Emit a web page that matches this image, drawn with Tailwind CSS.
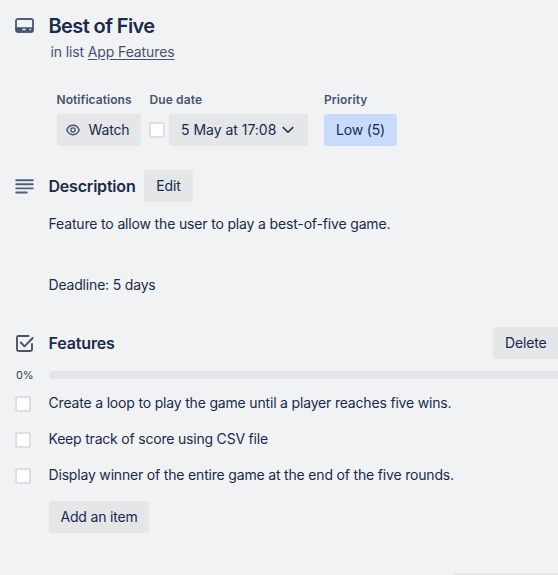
<!DOCTYPE html>
<html lang="en">
<head>
<meta charset="utf-8">
<title>Best of Five</title>
<script src="https://cdn.jsdelivr.net/npm/@tailwindcss/browser@4"></script>
</head>
<body class="h-[575px] w-[558px] overflow-hidden bg-[#f1f2f4] font-['Inter','Liberation_Sans',sans-serif] text-[14px] leading-5 tracking-[-0.15px] text-[#172b4d]">
<main class="h-[575px] overflow-hidden whitespace-nowrap">
  <header class="flex h-[90px] pt-[14px]">
    <div class="w-[48.5px] shrink-0 pl-[15px] pt-[4px]">
      <svg class="h-[15px] w-[19px]" viewBox="0 0 19 15" fill="none"><rect x="1" y="1" width="17" height="13" rx="2" stroke="#505f7b" stroke-width="1.900"/><path d="M1 9.300h17v3.200a1.500 1.500 0 0 1-1.500 1.500h-14A1.500 1.500 0 0 1 1 12.500z" fill="#44546f"/><path d="M7.500 11.500h3M14.500 11.500h1.500" stroke="#f1f2f4" stroke-width="1.300"/></svg>
    </div>
    <div>
      <h1 class="text-[20px] font-semibold leading-6 tracking-[-0.6px]">Best of Five</h1>
      <p class="mt-[4px] pl-[2px] tracking-[-0.12px] text-[#44546f]">in list <a class="underline underline-offset-2">App Features</a></p>
    </div>
  </header>

  <section class="flex h-[80px] pl-[57px]">
    <div class="w-[93px]">
      <h2 class="-ml-[0.5px] h-6 text-[12px] font-semibold tracking-[0.07px] text-[#44546f]">Notifications</h2>
      <button class="flex h-8 w-[84px] items-center rounded-[3px] bg-[#e4e6e8] pl-[9px]">
        <svg class="h-[12px] w-[14px]" viewBox="0 0 14 12" fill="none" stroke="#44546f" stroke-width="1.400"><path d="M.8 6C2 3 4.200 1.300 7 1.300S12 3 13.200 6C12 9 9.800 10.700 7 10.700S2 9 .8 6z"/><circle cx="7" cy="6" r="2.100"/></svg>
        <span class="ml-[8.5px]">Watch</span>
      </button>
    </div>
    <div class="w-[174px]">
      <h2 class="-ml-[0.5px] h-6 text-[12px] font-semibold tracking-[0.12px] text-[#44546f]">Due date</h2>
      <div class="flex items-center">
        <span class="-ml-px mr-1 size-4 rounded-[2px] border-2 border-[#dcdfe4] bg-white"></span>
        <button class="flex h-8 w-[139px] items-center rounded-[3px] bg-[#e4e6e8] pl-[12px] tracking-[-0.02px]">5 May at 17:08
          <svg class="ml-[6px] h-[8px] w-[12px]" viewBox="0 0 12 8" fill="none" stroke="#172b4d" stroke-width="1.600" stroke-linecap="round" stroke-linejoin="round"><path d="M1.200 1.500 6 6.300l4.800-4.800"/></svg>
        </button>
      </div>
    </div>
    <div>
      <h2 class="h-6 text-[12px] font-semibold tracking-[0.1px] text-[#44546f]">Priority</h2>
      <button class="h-8 w-[73px] rounded-[3px] bg-[#c7dbfd]">Low (5)</button>
    </div>
  </section>

  <section class="h-[157px]">
    <div class="flex h-8 items-center">
      <div class="w-[48.5px] shrink-0 pl-[15px]"><svg class="h-[15px] w-[19px]" viewBox="0 0 19 15" stroke="#505f7b" stroke-width="1.900" stroke-linecap="round"><path d="M1.200 1.200h16.600M1.200 5.300h16.600M1.200 9.400h16.600M1.200 13.500h10.600"/></svg></div>
      <h2 class="w-[95.5px] text-[16px] font-semibold tracking-[-0.2px]">Description</h2>
      <button class="h-8 w-[49px] rounded-[3px] bg-[#e4e6e8]">Edit</button>
    </div>
    <p class="mt-[12px] pl-[48.5px] tracking-[-0.16px]">Feature to allow the user to play a best-of-five game.</p>
    <p class="mt-[41px] pl-[48.5px] tracking-[-0.18px]">Deadline: 5 days</p>
  </section>

  <section>
    <div class="flex h-8 items-center">
      <div class="w-[48.5px] shrink-0 pl-[16px]"><svg class="h-[17px] w-[18px]" viewBox="0 0 18 17" fill="none" stroke="#44546f" stroke-width="1.900" stroke-linecap="round" stroke-linejoin="round"><path d="M12.500 1H2.500A1.500 1.500 0 0 0 1 2.500v12A1.500 1.500 0 0 0 2.500 16h12a1.500 1.500 0 0 0 1.500-1.500V9"/><path d="m4.800 7.500 3.700 3.800L16.700 3"/></svg></div>
      <h2 class="w-[444.5px] text-[16px] font-semibold tracking-[-0.15px]">Features</h2>
      <button class="h-8 w-[65px] shrink-0 rounded-l-[3px] bg-[#e4e6e8] pl-[12px] text-left">Delete</button>
    </div>
    <div class="mt-[6px] flex h-5 items-center">
      <span class="w-[49px] pl-[16px] text-[11px] tracking-[-0.3px] text-[#2f4160]">0%</span>
      <div class="h-2 flex-1 rounded-l-full bg-[#e2e4e8]"></div>
    </div>
    <ul class="tracking-[-0.18px]">
      <li class="flex h-9 items-center"><span class="ml-[15px] mr-[17.5px] mt-px size-4 rounded-[2px] border-2 border-[#dcdfe4] bg-white"></span><span>Create a loop to play the game until a player reaches five wins.</span></li>
      <li class="flex h-9 items-center"><span class="ml-[15px] mr-[17.5px] mt-px size-4 rounded-[2px] border-2 border-[#dcdfe4] bg-white"></span><span class="tracking-[-0.2px]">Keep track of score using CSV file</span></li>
      <li class="flex h-9 items-center"><span class="ml-[15px] mr-[17.5px] mt-px size-4 rounded-[2px] border-2 border-[#dcdfe4] bg-white"></span><span>Display winner of the entire game at the end of the five rounds.</span></li>
    </ul>
    <button class="ml-[49px] mt-[8px] block h-8 w-[100px] rounded-[3px] bg-[#e4e6e8] tracking-[-0.18px]">Add an item</button>
    <div class="ml-[453px] mt-[40px] h-8 rounded-tl-[3px] bg-[#e4e6e8]"></div>
  </section>
</main>
</body>
</html>
